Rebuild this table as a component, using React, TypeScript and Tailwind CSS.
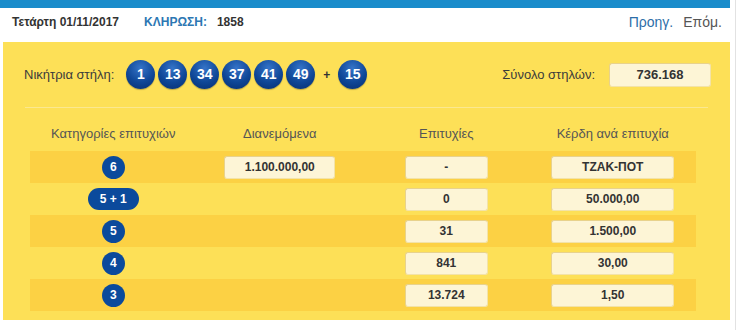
import React from 'react';

const winning = [1, 13, 34, 37, 41, 49];
const joker = 15;

const rows = [
    { cat: '6', pool: '1.100.000,00', wins: '-', prize: 'ΤΖΑΚ-ΠΟΤ', dark: true },
    { cat: '5 + 1', pool: '', wins: '0', prize: '50.000,00', dark: false },
    { cat: '5', pool: '', wins: '31', prize: '1.500,00', dark: true },
    { cat: '4', pool: '', wins: '841', prize: '30,00', dark: false },
    { cat: '3', pool: '', wins: '13.724', prize: '1,50', dark: true },
];

function Ball({ n }: { n: number }) {
    return (
        <span className="flex h-[29px] w-[29px] items-center justify-center rounded-full bg-[radial-gradient(circle_at_50%_28%,#3574c8_0%,#0f4797_55%,#062d6f_100%)] text-[14px] font-bold text-white shadow-[0_1px_1px_rgba(0,0,0,0.25)]">
            {n}
        </span>
    );
}

function ValueBox({ value, className }: { value: string; className: string }) {
    return (
        <div className={`flex h-[23px] items-center justify-center rounded-[3px] border border-[#e8d28c] border-b-[#f3e3a8] border-r-[#f3e3a8] bg-[#fdf5d6] text-[12px] font-bold text-[#333] ${className}`}>
            {value}
        </div>
    );
}

export default function App() {
    return (
        <div className="h-[330px] w-[736px] border-r border-[#e2e2e2] bg-white font-['Liberation_Sans',Arial,sans-serif]">
            <div className="w-[730px]">
                <div className="h-2 bg-[#1a8ccb]" />

                <div className="flex h-[34px] items-center pb-[6px] pl-3 pr-2">
                    <span className="text-[12px] font-bold text-[#333]">Τετάρτη 01/11/2017</span>
                    <span className="ml-[25px] text-[12px] font-bold text-[#2c77b3]">ΚΛΗΡΩΣΗ:</span>
                    <span className="ml-[10px] text-[12px] font-bold text-[#333]">1858</span>
                    <span className="ml-auto text-[14px] text-[#2c6ea8]">Προηγ.</span>
                    <span className="ml-[10px] text-[14px] text-[#555]">Επόμ.</span>
                </div>

                <div className="ml-[3px] h-[278px] bg-[#fde057]">
                    <div className="flex h-[65px] items-center pl-[21px] pr-[19px]">
                        <span className="text-[13px] text-[#3b3b3b]">Νικήτρια στήλη:</span>
                        <div className="ml-[12px] flex items-center gap-[3px]">
                            {winning.map(n => (
                                <Ball key={n} n={n} />
                            ))}
                            <span className="mx-[5px] text-[12px] font-bold text-[#333]">+</span>
                            <Ball n={joker} />
                        </div>
                        <span className="ml-auto text-[13px] text-[#3b3b3b]">Σύνολο στηλών:</span>
                        <ValueBox value="736.168" className="ml-[14px] h-[24px] w-[102px] text-[13px]" />
                    </div>

                    <div className="mx-[22px] h-px bg-[#fbe890]" />

                    <div className="ml-[27px] mr-[34px] mt-[10px] grid h-[32px] grid-cols-4 items-center text-center text-[13px] text-[#555]">
                        <span>Κατηγορίες επιτυχιών</span>
                        <span>Διανεμόμενα</span>
                        <span>Επιτυχίες</span>
                        <span>Κέρδη ανά επιτυχία</span>
                    </div>

                    <div className="ml-[27px] mr-[34px] mt-[1px]">
                        {rows.map(r => (
                            <div
                                key={r.cat}
                                className={`grid h-[32px] grid-cols-4 items-center ${r.dark ? 'bg-[#fcd144]' : 'bg-[#fde057]'}`}
                            >
                                <div className="flex justify-center">
                                    {r.cat.length > 1 ? (
                                        <span className="flex h-[22px] w-[51px] items-center justify-center rounded-full bg-[#0b4a9c] text-[12px] font-bold text-white">
                                            {r.cat}
                                        </span>
                                    ) : (
                                        <span className="flex h-[23px] w-[23px] items-center justify-center rounded-full bg-[#0b4a9c] text-[12px] font-bold text-white">
                                            {r.cat}
                                        </span>
                                    )}
                                </div>
                                <div className="flex justify-center">
                                    {r.pool && <ValueBox value={r.pool} className="w-[111px]" />}
                                </div>
                                <div className="flex justify-center">
                                    <ValueBox value={r.wins} className="w-[83px]" />
                                </div>
                                <div className="flex justify-center">
                                    <ValueBox value={r.prize} className="w-[123px]" />
                                </div>
                            </div>
                        ))}
                    </div>
                </div>
            </div>
        </div>
    );
}
